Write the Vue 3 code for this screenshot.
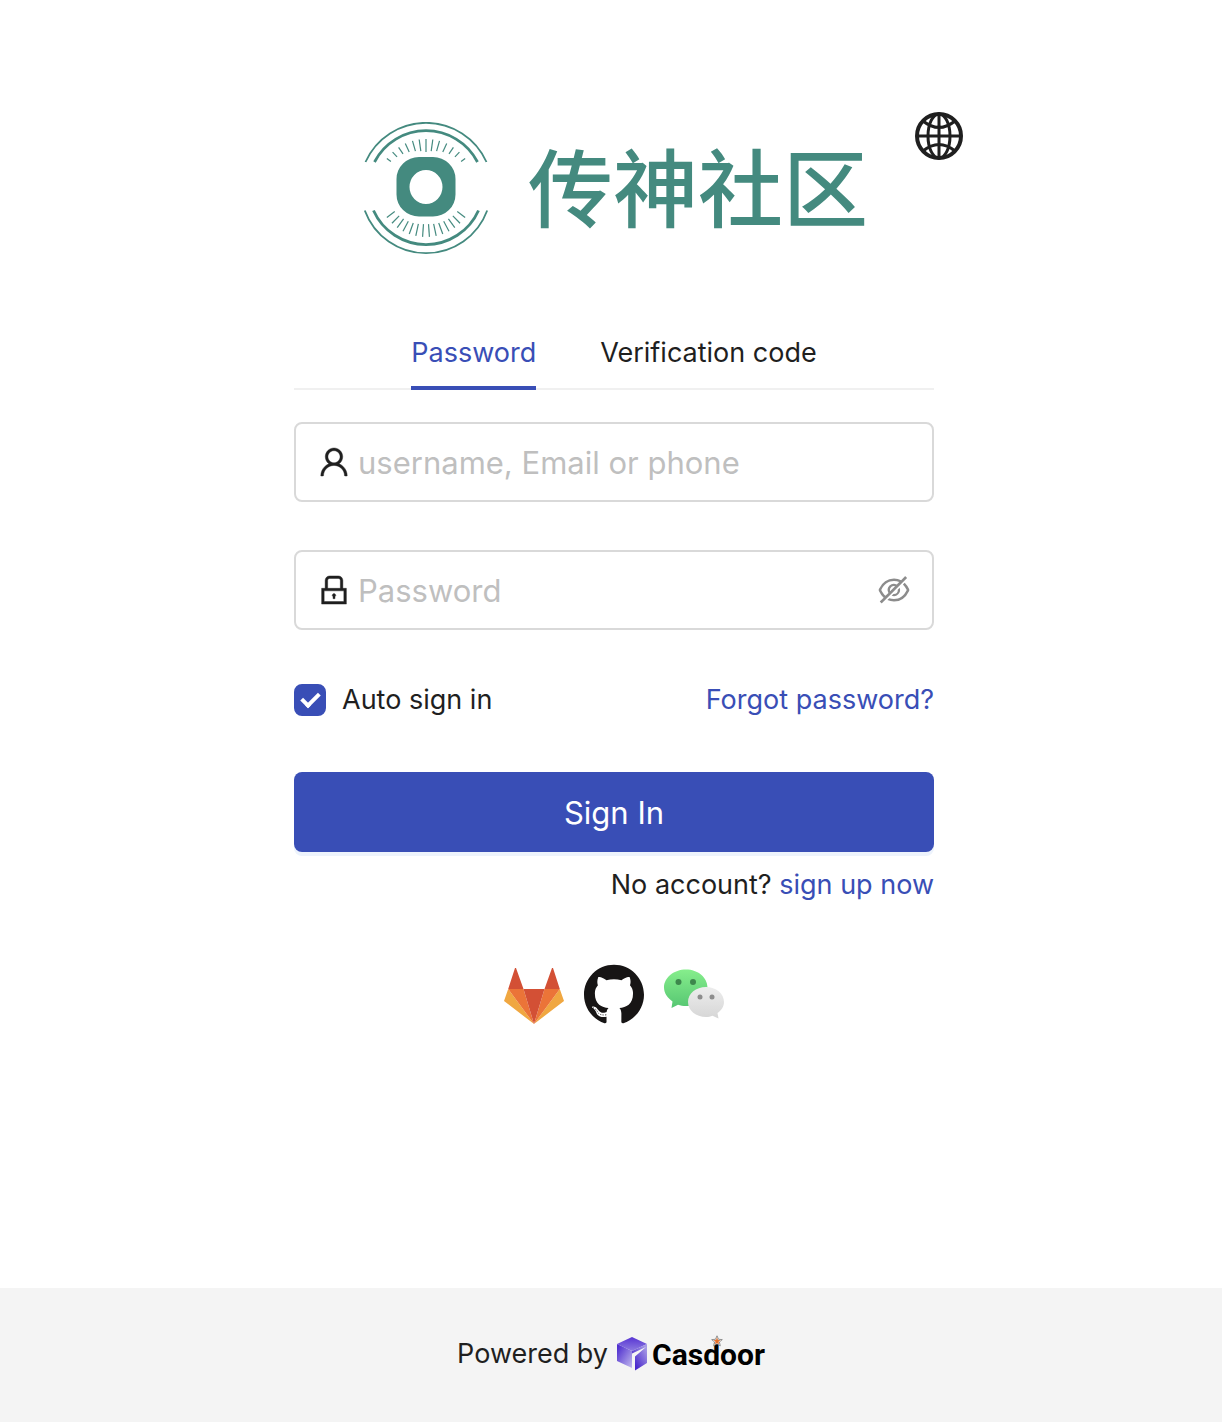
<script setup>
import { ref } from 'vue';

const tabs = ['Password', 'Verification code'];
const activeTab = ref('Password');
const username = ref('');
const password = ref('');
const showPassword = ref(false);
const autoSignIn = ref(true);

// Rays of the eye logo, as angles from the vertical axis
const topRays = [-53, -43, -34, -25, -16, -8, 0, 8, 16, 25, 34, 43, 53];
const bottomRays = [-53, -44, -36, -28, -20, -12, -4, 4, 12, 20, 28, 36, 44, 53];

function ray(angle, down) {
  const rad = (angle * Math.PI) / 180;
  const dir = down ? 1 : -1;
  const outer = 49;
  const inner = 36 + Math.abs(angle) * (down ? 0.06 : 0.15);
  return {
    x1: 72 + Math.sin(rad) * inner,
    y1: 78 + Math.cos(rad) * inner * dir,
    x2: 72 + Math.sin(rad) * outer,
    y2: 78 + Math.cos(rad) * outer * dir
  };
}
</script>

<template>
  <div class="page">
    <main class="main">
      <div class="panel">
        <header class="header">
          <div class="brand">
            <svg class="brand-mark" viewBox="10 12 125 133" fill="none" stroke="#448a7f" aria-hidden="true">
              <path d="M11.5 52A66.300 66.300 0 0 1 132.500 52" stroke-width="1.800" />
              <path d="M20.500 52A58 58 0 0 1 123.500 52" stroke-width="2.800" />
              <path d="M10.800 100.500A65.200 65.200 0 0 0 133.200 100.500" stroke-width="1.800" />
              <path d="M19.500 100.500A57.500 57.500 0 0 0 124.500 100.500" stroke-width="2.800" />
              <g stroke-width="1.2">
                <line v-for="a in topRays" :key="'t' + a" v-bind="ray(a, false)" />
                <line v-for="a in bottomRays" :key="'b' + a" v-bind="ray(a, true)" />
              </g>
              <path
                d="M65 47H79A22.500 22 0 0 1 101.500 69V84.500A22.500 22 0 0 1 79 106.500H65A22.500 22 0 0 1 42.500 84.500V69A22.500 22 0 0 1 65 47ZM72 60A16.500 17 0 1 0 72 94A16.500 17 0 1 0 72 60Z"
                fill="#448a7f" fill-rule="evenodd" stroke="none"
              />
            </svg>
            <span class="brand-name">传神社区</span>
          </div>
          <button type="button" class="language" aria-label="Language">
            <svg viewBox="0 0 48 48" fill="none" stroke="#1f1f1f" stroke-width="3">
              <circle cx="24" cy="24" r="22" stroke-width="4" />
              <ellipse cx="24" cy="24" rx="11" ry="22" />
              <path d="M24 1V47M1 24H47M8 9Q24 22 40 9M8 39Q24 26 40 39" />
            </svg>
          </button>
        </header>

        <form class="form" @submit.prevent>
          <div class="tabs" role="tablist">
            <button
              v-for="tab in tabs"
              :key="tab"
              type="button"
              role="tab"
              class="tab"
              :class="{ active: tab === activeTab }"
              :aria-selected="tab === activeTab"
              @click="activeTab = tab"
            >
              {{ tab }}
            </button>
          </div>

          <div class="field">
            <label for="username" aria-label="Username">
              <svg class="icon" viewBox="0 0 1024 1024" fill="currentColor" stroke="currentColor" stroke-width="12">
                <path d="M858.5 763.6a374 374 0 00-80.6-119.5 375.63 375.63 0 00-119.5-80.6c-.4-.2-.8-.3-1.2-.5C719.5 518 760 444.7 760 362c0-137-111-248-248-248S264 225 264 362c0 82.7 40.5 156 102.8 201.1-.4.2-.8.3-1.2.5-44.8 18.9-85 46-119.5 80.6a375.63 375.63 0 00-80.6 119.5A371.7 371.7 0 00136 901.8a8 8 0 008 8.2h60c4.4 0 7.9-3.5 8-7.8 2-77.2 33-149.5 87.8-204.3 56.7-56.7 132-87.9 212.2-87.9s155.5 31.2 212.2 87.9C779 752.7 810 825 812 902.2c.1 4.4 3.6 7.8 8 7.8h60a8 8 0 008-8.2c-1-47.8-10.9-94.3-29.5-138.2zM512 534c-45.9 0-89.1-17.9-121.6-50.4S340 407.9 340 362c0-45.9 17.9-89.1 50.4-121.6S466.1 190 512 190s89.1 17.9 121.6 50.4S684 316.1 684 362c0 45.9-17.9 89.1-50.4 121.6S557.9 534 512 534z" />
              </svg>
            </label>
            <input id="username" v-model="username" type="text" placeholder="username, Email or phone">
          </div>

          <div class="field">
            <label for="password" aria-label="Password">
              <svg class="icon" viewBox="0 0 1024 1024" fill="currentColor" stroke="currentColor" stroke-width="12">
                <path d="M864 464H764V240c0-70.7-57.3-128-128-128H388c-70.7 0-128 57.3-128 128v224H160v448h704zM332 240c0-30.9 25.1-56 56-56h248c30.9 0 56 25.1 56 56v224H332V240zm460 600H232V536h560v304zM484 701v53c0 4.4 3.6 8 8 8h40c4.4 0 8-3.6 8-8v-53a48.1 48.1 0 10-56 0z" />
              </svg>
            </label>
            <input
              id="password"
              v-model="password"
              :type="showPassword ? 'text' : 'password'"
              placeholder="Password"
            >
            <button type="button" class="reveal" aria-label="Show password" @click="showPassword = !showPassword">
              <svg class="icon" viewBox="0 0 1024 1024" fill="currentColor">
                <path d="M942.2 486.2Q889.47 375.11 816.7 305l-50.88 50.88C807.31 395.53 843.45 447.4 874.7 512 791.5 684.2 673.4 766 512 766q-72.67 0-133.87-22.38L323 798.75Q408 838 512 838q288.3 0 430.2-300.3a60.29 60.29 0 000-51.5zm-63.57-320.64L836 122.88a8 8 0 00-11.32 0L715.31 232.2Q624.86 186 512 186q-288.3 0-430.2 300.3a60.3 60.3 0 000 51.5q56.69 119.4 136.5 191.41L112.48 835a8 8 0 000 11.31L155.17 889a8 8 0 0011.31 0l712.15-712.12a8 8 0 000-11.32zM149.3 512C232.6 339.8 350.7 258 512 258c54.54 0 104.13 9.36 149.12 28.39l-70.3 70.3a176 176 0 00-238.13 238.13l-83.42 83.42C223.1 637.49 183.3 582.28 149.3 512zm246.7 0a112.11 112.11 0 01146.2-106.69L401.31 546.2A112 112 0 01396 512z" />
                <path d="M508 624c-3.46 0-6.87-.16-10.25-.47l-52.82 52.82a176.09 176.09 0 00227.42-227.42l-52.82 52.82c.31 3.38.47 6.79.47 10.25a111.94 111.94 0 01-112 112z" />
              </svg>
            </button>
          </div>

          <div class="options">
            <label class="remember">
              <input v-model="autoSignIn" type="checkbox">
              Auto sign in
            </label>
            <a href="#">Forgot password?</a>
          </div>

          <button type="submit" class="submit">Sign In</button>
          <p class="signup">No account? <a href="#">sign up now</a></p>
        </form>

        <div class="providers">
          <a href="#" aria-label="Sign in with GitLab">
            <svg viewBox="0 0 60 60">
              <path d="M30 60L0 37 4.200 25zM30 60L60 37 55.800 25z" fill="#f0a741" />
              <path d="M30 60L4.200 25H19.500zM30 60L55.800 25H40.500z" fill="#eb7438" />
              <path d="M30 60L19.500 25H40.500zM4.200 25L11 4H12L19.500 25zM55.800 25L49 4H48L40.500 25z" fill="#d35035" />
            </svg>
          </a>
          <a href="#" aria-label="Sign in with GitHub">
            <svg viewBox="0 0 24 24">
              <path fill="#171515" d="M12 .297c-6.63 0-12 5.373-12 12 0 5.303 3.438 9.8 8.205 11.385.6.113.82-.258.82-.577 0-.285-.01-1.04-.015-2.04-3.338.724-4.042-1.61-4.042-1.61C4.422 18.07 3.633 17.7 3.633 17.7c-1.087-.744.084-.729.084-.729 1.205.084 1.838 1.236 1.838 1.236 1.07 1.835 2.809 1.305 3.495.998.108-.776.417-1.305.76-1.605-2.665-.3-5.466-1.332-5.466-5.93 0-1.31.465-2.38 1.235-3.22-.135-.303-.54-1.523.105-3.176 0 0 1.005-.322 3.3 1.23.96-.267 1.98-.399 3-.405 1.02.006 2.04.138 3 .405 2.28-1.552 3.285-1.23 3.285-1.23.645 1.653.24 2.873.12 3.176.765.84 1.23 1.91 1.23 3.22 0 4.61-2.805 5.625-5.475 5.92.42.36.81 1.096.81 2.22 0 1.606-.015 2.896-.015 3.286 0 .315.21.69.825.57C20.565 22.092 24 17.592 24 12.297c0-6.627-5.373-12-12-12" />
              <path d="M3.600 17.500Q4.800 17.900 5.500 19.300Q6.400 20.700 9 20.300" fill="none" stroke="#171515" stroke-width="0.400" stroke-dasharray="0.400 0.600" />
            </svg>
          </a>
          <a href="#" aria-label="Sign in with WeChat">
            <svg viewBox="0 0 60 60">
              <defs>
                <linearGradient id="green" x1="0" y1="0" x2="0" y2="1">
                  <stop offset="0" stop-color="#86ee8c" />
                  <stop offset="1" stop-color="#56c672" />
                </linearGradient>
                <linearGradient id="grey" x1="0" y1="0" x2="0" y2="1">
                  <stop offset="0" stop-color="#ededed" />
                  <stop offset="1" stop-color="#d6d6d6" />
                </linearGradient>
              </defs>
              <path d="M22 5.500C34 5.500 43.500 13.500 43.500 23.500S34 42 22 42C19 42 16.500 41.500 14 40.700L7.500 44 8.500 37.500C3.500 34 0 29 0 23.500 0 13.500 10 5.500 22 5.500Z" fill="url(#green)" />
              <circle cx="14.500" cy="18" r="3" fill="#3d874c" />
              <circle cx="29" cy="18" r="3" fill="#3d874c" />
              <path d="M42 23C52 23 60 29.500 60 38 60 42.500 57.500 46.500 53.500 49L54.500 54.500 48.500 51.800C46.500 52.600 44.500 53 42 53 32 53 24 46.500 24 38S32 23 42 23Z" fill="url(#grey)" />
              <circle cx="36" cy="33" r="2.500" fill="#8d8d8d" />
              <circle cx="48" cy="33" r="2.500" fill="#8d8d8d" />
            </svg>
          </a>
        </div>
      </div>
    </main>

    <footer class="footer">
      <span class="powered">Powered by</span>
      <a href="#" class="casdoor">
        <svg class="cube" viewBox="0 0 32 36" aria-hidden="true">
          <defs>
            <linearGradient id="cubeTop" x1="0" y1="0" x2="0" y2="1">
              <stop offset="0" stop-color="#5734d3" />
              <stop offset="1" stop-color="#8d7be0" />
            </linearGradient>
            <linearGradient id="cubeLeft" x1="0" y1="0" x2="1" y2="1">
              <stop offset="0.1" stop-color="#5030cf" />
              <stop offset="1" stop-color="#c3bbee" />
            </linearGradient>
            <linearGradient id="cubeRight" x1="1" y1="0" x2="0" y2="1">
              <stop offset="0.1" stop-color="#a79be6" />
              <stop offset="0.8" stop-color="#4a29cc" />
            </linearGradient>
          </defs>
          <path d="M16 1L31 8 16 15 1 8Z" fill="url(#cubeTop)" />
          <path d="M1 8L16 15V32L1 25Z" fill="url(#cubeLeft)" />
          <path d="M31 8L16 15V20H19V34.500L31 27Z" fill="url(#cubeRight)" />
          <path d="M30 11L16 17.500V32L19 33V20.500Z" fill="#f4f4f4" />
        </svg>
        <span class="casdoor-name">Casdoor</span>
        <svg class="star" viewBox="0 0 12 12" aria-hidden="true">
          <path d="M6 .8L7.500 4.300 11.300 4.600 8.400 7 9.300 10.800 6 8.800 2.700 10.800 3.600 7 .7 4.600 4.500 4.300Z" fill="#fff" stroke="#777" stroke-width="0.800" />
          <path d="M6 2.500L7 5 9.500 5.200 7.500 6.800 8 9.300 6 8 4 9.300 4.500 6.800 2.500 5.200 5 5Z" fill="#e8702a" />
        </svg>
      </a>
    </footer>
  </div>
</template>

<style>
body {
  margin: 0;
}
</style>

<style scoped>
.page {
  display: flex;
  flex-direction: column;
  min-height: 100vh;
  font-family: Inter, "Noto Sans CJK SC", sans-serif;
  font-size: 27px;
  line-height: 44px;
  color: #1f1f1f;
  background: #fff;
}

button,
input {
  font: inherit;
  color: inherit;
  margin: 0;
  padding: 0;
  border: 0;
  background: none;
}

button {
  cursor: pointer;
}

svg {
  display: block;
}

a {
  color: #394eb6;
  text-decoration: none;
}

.main {
  flex: 1;
  padding: 112px 0 64px 6px;
}

.panel {
  max-width: 698px;
  margin: 0 auto;
}

.header {
  display: grid;
  grid-template-columns: 1fr auto 1fr;
  align-items: start;
}

.brand {
  grid-column: 2;
  display: flex;
  align-items: flex-start;
  gap: 39px;
  padding: 10px 0 0 4px;
}

.brand-mark {
  width: 125px;
  height: 133px;
}

.brand-name {
  font-family: "Noto Sans CJK SC", sans-serif;
  font-size: 85px;
  font-weight: 500;
  line-height: 124px;
  color: #448a7f;
}

.language {
  justify-self: end;
}

.language svg {
  width: 48px;
  height: 48px;
}

.form {
  max-width: 640px;
  margin: 0 auto;
}

.tabs {
  display: flex;
  justify-content: center;
  gap: 64px;
  margin-top: 76px;
  margin-bottom: 32px;
  box-shadow: inset 0 -2px #f0f0f0;
}

.tab {
  padding-bottom: 11px;
  border-bottom: 4px solid transparent;
}

.tab.active {
  color: #394eb6;
  border-bottom-color: #394eb6;
}

.field {
  display: flex;
  align-items: center;
  gap: 6px;
  height: 80px;
  padding: 0 20px;
  margin-bottom: 48px;
  box-sizing: border-box;
  border: 2px solid #d9d9d9;
  border-radius: 8px;
}

.field input {
  flex: 1;
  min-width: 0;
  padding-top: 2px;
  font-size: 31px;
  outline: none;
}

.field input::placeholder {
  color: #bfbfbf;
  opacity: 1;
}

.icon {
  width: 36px;
  height: 36px;
}

.reveal {
  color: #8c8c8c;
}

.options {
  display: flex;
  justify-content: space-between;
}

.remember {
  display: flex;
  align-items: center;
  gap: 16px;
}

.remember input {
  appearance: none;
  display: grid;
  place-items: center;
  width: 32px;
  height: 32px;
  border: 2px solid #d9d9d9;
  border-radius: 8px;
}

.remember input:checked {
  border-color: #394eb6;
  background: #394eb6;
}

.remember input:checked::after {
  content: "";
  width: 7px;
  height: 14px;
  margin-bottom: 4px;
  border: solid #fff;
  border-width: 0 4px 4px 0;
  transform: rotate(45deg);
}

.submit {
  display: block;
  width: 100%;
  height: 80px;
  margin-top: 50px;
  padding-top: 2px;
  font-size: 31px;
  color: #fff;
  background: #394eb6;
  border-radius: 8px;
  box-shadow: 0 4px 0 #edf3fc;
}

.signup {
  margin: 11px 0 0;
  text-align: right;
}

.providers {
  display: flex;
  justify-content: center;
  gap: 20px;
  margin-top: 57px;
}

.providers svg {
  width: 60px;
  height: 60px;
}

.footer {
  display: flex;
  justify-content: center;
  align-items: center;
  gap: 8px;
  height: 134px;
  background: #f4f4f4;
}

.powered {
  padding-bottom: 2px;
}

.casdoor {
  position: relative;
  display: flex;
  align-items: center;
  gap: 4px;
}

.cube {
  width: 32px;
  height: 36px;
  margin-bottom: 3px;
}

.casdoor-name {
  font-family: Roboto, sans-serif;
  font-size: 30px;
  font-weight: 700;
  color: #000;
}

.star {
  position: absolute;
  top: 2px;
  right: 42px;
  width: 12px;
  height: 12px;
}
</style>
